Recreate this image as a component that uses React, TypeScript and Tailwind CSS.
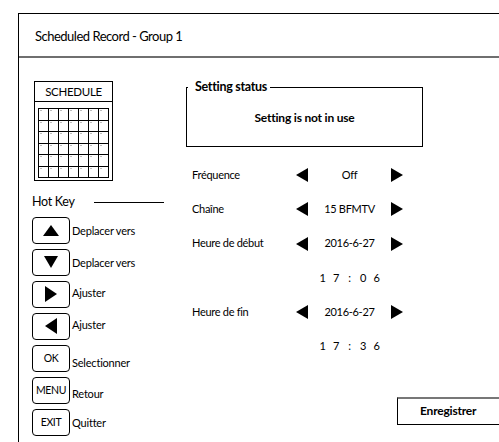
import React from "react";

type Dir = "up" | "down" | "left" | "right";

function Tri({ dir, w, h }: { dir: Dir; w: number; h: number }) {
  let pts = "";
  if (dir === "up") pts = `0,${h} ${w / 2},0 ${w},${h}`;
  if (dir === "down") pts = `0,0 ${w},0 ${w / 2},${h}`;
  if (dir === "left") pts = `${w},0 ${w},${h} 0,${h / 2}`;
  if (dir === "right") pts = `0,0 ${w},${h / 2} 0,${h}`;
  return (
    <svg width={w} height={h} viewBox={`0 0 ${w} ${h}`} className="block">
      <polygon points={pts} fill="#000" />
    </svg>
  );
}

function KeyBtn({ children, label, labelClass = "" }: { children: React.ReactNode; label: string; labelClass?: string }) {
  return (
    <div className="flex items-center">
      <div className="w-[38px] h-[27px] border border-black rounded-[4px] flex items-center justify-center text-[10.5px] tracking-[-0.4px] leading-none">
        {children}
      </div>
      <span className={`ml-[2px] text-[11px] tracking-[-0.2px] leading-none ${labelClass}`}>{label}</span>
    </div>
  );
}

function Row({ label, value, arrows = true }: { label?: string; value: React.ReactNode; arrows?: boolean }) {
  return (
    <div className="h-[34.3px] flex items-center text-[11px] tracking-[-0.3px]">
      <div className="w-[110px] pl-[6px]">{label}</div>
      <div className="w-[12px]">{arrows && <Tri dir="left" w={12} h={14} />}</div>
      <div className="w-[83px] flex justify-center">{value}</div>
      <div className="w-[12px]">{arrows && <Tri dir="right" w={12} h={14} />}</div>
    </div>
  );
}

function Time({ chars }: { chars: string[] }) {
  return (
    <div className="flex gap-[7.5px]">
      {chars.map((c, i) => (
        <span key={i} className="w-[6px] text-center">{c}</span>
      ))}
    </div>
  );
}

export default function App() {
  const cells = Array.from({ length: 42 });
  return (
    <div
      className="w-[499px] h-[442px] overflow-hidden bg-white text-black relative"
      style={{ fontFamily: "Lato, 'Open Sans', sans-serif" }}
    >
      <div className="ml-[18px] mt-[13px] w-[620px] h-[460px] border-l border-t border-black flex flex-col">
        <div className="h-[44px] border-b-2 border-[#6f6f6f] flex items-center pl-[16px] pt-[4px] text-[13px] tracking-[-0.5px]">
          Scheduled Record - Group 1
        </div>
        <div className="flex">
          {/* Left column */}
          <div className="w-[167px] flex flex-col">
            <div className="ml-[15px] mt-[23px] w-[79px] h-[100px] border border-black flex flex-col">
              <div className="h-[20px] border-b border-black flex items-center justify-center text-[11.5px] tracking-[-0.3px]">
                SCHEDULE
              </div>
              <div className="ml-[2.5px] mt-[6px] w-[71px] grid grid-cols-7 border-l border-t border-black">
                {cells.map((_, i) => (
                  <div key={i} className="h-[11.5px] border-r border-b border-black relative">
                    <div className="absolute left-[1px] top-[1px] w-[2px] h-[1px] bg-[#bbb]" />
                  </div>
                ))}
              </div>
            </div>
            <div className="ml-[13px] mt-[15px] flex items-center">
              <span className="w-[48px] text-[12.5px] tracking-[-0.3px] leading-none">Hot Key</span>
              <div className="ml-[14px] w-[70px] h-px bg-black" />
            </div>
            <div className="ml-[13px] mt-[8px] flex flex-col gap-[5px]">
              <KeyBtn label="Deplacer vers"><Tri dir="up" w={16} h={11} /></KeyBtn>
              <KeyBtn label="Deplacer vers"><Tri dir="down" w={14} h={12} /></KeyBtn>
              <KeyBtn label="Ajuster" labelClass="-mt-[4px]"><Tri dir="right" w={12} h={16} /></KeyBtn>
              <KeyBtn label="Ajuster" labelClass="-mt-[4px]"><Tri dir="left" w={12} h={16} /></KeyBtn>
              <KeyBtn label="Selectionner" labelClass="mt-[8px]">OK</KeyBtn>
              <KeyBtn label="Retour" labelClass="mt-[7px]">MENU</KeyBtn>
              <KeyBtn label="Quitter">EXIT</KeyBtn>
            </div>
          </div>
          {/* Right column */}
          <div className="flex-1 flex flex-col">
            <fieldset className="mt-[21px] w-[237px] h-[68px] border border-black m-0 p-0">
              <legend className="ml-[1px] pl-[7px] pr-[3px] text-[12.5px] font-bold tracking-[-0.3px] leading-[16px]">
                Setting status
              </legend>
              <div className="pt-[17px] text-center text-[12px] font-bold tracking-[-0.2px] leading-none">
                Setting is not in use
              </div>
            </fieldset>
            <div className="mt-[11px] flex flex-col">
              <Row label="Fréquence" value="Off" />
              <Row label="Chaîne" value="15 BFMTV" />
              <Row label="Heure de début" value="2016-6-27" />
              <Row arrows={false} value={<Time chars={["1", "7", ":", "0", "6"]} />} />
              <Row label="Heure de fin" value="2016-6-27" />
              <Row arrows={false} value={<Time chars={["1", "7", ":", "3", "6"]} />} />
            </div>
            <div className="ml-[211px] mt-[33px] w-[110px] h-[28px] border-l border-b border-black border-t-2 border-t-[#777] flex items-center pl-[22px] text-[12px] font-bold tracking-[-0.2px]">
              Enregistrer
            </div>
          </div>
        </div>
      </div>
    </div>
  );
}
